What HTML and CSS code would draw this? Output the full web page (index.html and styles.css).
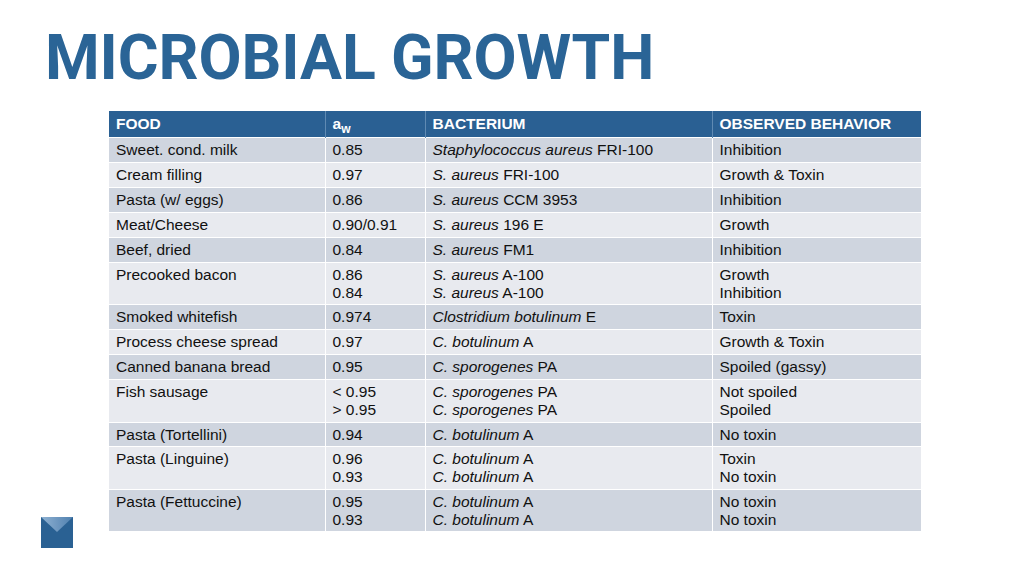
FILE: index.html
```html
<!DOCTYPE html>
<html>
<head>
<meta charset="utf-8">
<link rel="stylesheet" href="styles.css">
</head>
<body>
<div class="slide">
  <h1 class="title">MICROBIAL GROWTH</h1>
  <table class="data">
    <colgroup>
      <col class="c-food"><col class="c-aw"><col class="c-bact"><col class="c-obs">
    </colgroup>
    <thead>
      <tr><th>FOOD</th><th>a<sub>w</sub></th><th>BACTERIUM</th><th>OBSERVED BEHAVIOR</th></tr>
    </thead>
    <tbody>
      <tr class="dark"><td>Sweet. cond. milk</td><td>0.85</td><td><i>Staphylococcus aureus</i> FRI-100</td><td>Inhibition</td></tr>
      <tr class="light"><td>Cream filling</td><td>0.97</td><td><i>S. aureus</i> FRI-100</td><td>Growth &amp; Toxin</td></tr>
      <tr class="dark"><td>Pasta (w/ eggs)</td><td>0.86</td><td><i>S. aureus</i> CCM 3953</td><td>Inhibition</td></tr>
      <tr class="light"><td>Meat/Cheese</td><td>0.90/0.91</td><td><i>S. aureus</i> 196 E</td><td>Growth</td></tr>
      <tr class="dark"><td>Beef, dried</td><td>0.84</td><td><i>S. aureus</i> FM1</td><td>Inhibition</td></tr>
      <tr class="light tight"><td>Precooked bacon</td><td>0.86<br>0.84</td><td><i>S. aureus</i> A-100<br><i>S. aureus</i> A-100</td><td>Growth<br>Inhibition</td></tr>
      <tr class="dark"><td>Smoked whitefish</td><td>0.974</td><td><i>Clostridium botulinum</i> E</td><td>Toxin</td></tr>
      <tr class="light"><td>Process cheese spread</td><td>0.97</td><td><i>C. botulinum</i> A</td><td>Growth &amp; Toxin</td></tr>
      <tr class="dark"><td>Canned banana bread</td><td>0.95</td><td><i>C. sporogenes</i> PA</td><td>Spoiled (gassy)</td></tr>
      <tr class="light"><td>Fish sausage</td><td>&lt; 0.95<br>&gt; 0.95</td><td><i>C. sporogenes</i> PA<br><i>C. sporogenes</i> PA</td><td>Not spoiled<br>Spoiled</td></tr>
      <tr class="dark tight"><td>Pasta (Tortellini)</td><td>0.94</td><td><i>C. botulinum</i> A</td><td>No toxin</td></tr>
      <tr class="light"><td>Pasta (Linguine)</td><td>0.96<br>0.93</td><td><i>C. botulinum</i> A<br><i>C. botulinum</i> A</td><td>Toxin<br>No toxin</td></tr>
      <tr class="dark tight"><td>Pasta (Fettuccine)</td><td>0.95<br>0.93</td><td><i>C. botulinum</i> A<br><i>C. botulinum</i> A</td><td>No toxin<br>No toxin</td></tr>
    </tbody>
  </table>
  <svg class="logo" width="32" height="31" viewBox="0 0 32 31">
    <defs>
      <linearGradient id="lg" x1="0" y1="0" x2="1" y2="0">
        <stop offset="0" stop-color="#8fb2d2"/>
        <stop offset="0.5" stop-color="#6f98c0"/>
        <stop offset="1" stop-color="#4f80af"/>
      </linearGradient>
    </defs>
    <rect x="0" y="0" width="32" height="31" fill="#2a6193"/>
    <polygon points="0,0 32,0 16,15" fill="url(#lg)"/>
  </svg>
</div>
</body>
</html>
```
FILE: styles.css
```css
html, body {
  margin: 0;
  padding: 0;
  background: #ffffff;
}
.slide {
  position: relative;
  width: 1024px;
  height: 576px;
  overflow: hidden;
  background: #ffffff;
  font-family: "Liberation Sans", Arial, sans-serif;
}
.title {
  margin: 0;
  padding: 26px 0 0 45px;
  font-family: Roboto, "DejaVu Sans Condensed", sans-serif;
  font-weight: bold;
  font-size: 62.5px;
  line-height: 63px;
  letter-spacing: -0.1px;
  color: #2a6496;
}
.data {
  margin: 22px 0 0 109px;
  width: 812px;
  border-collapse: collapse;
  table-layout: fixed;
  font-size: 15.5px;
  line-height: 18px;
  color: #111111;
}
.c-food { width: 216px; }
.c-aw { width: 100px; }
.c-bact { width: 287px; }
.c-obs { width: 209px; }
.data th {
  background: #2a6093;
  color: #ffffff;
  font-weight: bold;
  text-align: left;
  padding: 4px 7px 4px;
  height: 18px;
  border-left: 1px solid #5f8ab3;
  white-space: nowrap;
}
.data th:first-child { border-left: none; }
.data th sub {
  font-size: 12px;
  line-height: 0;
  vertical-align: -4px;
}
.data td {
  padding: 3px 7px 3px;
  vertical-align: top;
  border-top: 1px solid #ffffff;
  border-left: 1px solid #ffffff;
  white-space: nowrap;
}
.data tr.tight td { padding-bottom: 2px; }
.data td:first-child { border-left: none; }
.data tr.dark td { background: #cfd5df; }
.data tr.light td { background: #e8eaef; }
.logo {
  position: absolute;
  left: 41px;
  top: 517px;
  display: block;
}
```
